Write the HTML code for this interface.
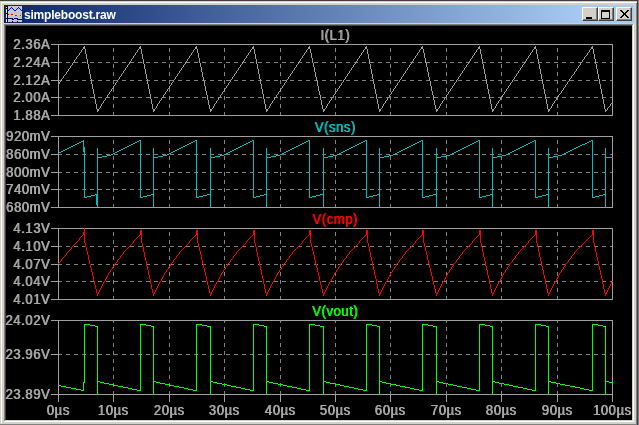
<!DOCTYPE html>
<html><head><meta charset="utf-8"><style>
html,body{margin:0;padding:0;width:639px;height:425px;overflow:hidden;background:#d4d0c8;position:relative;font-family:"Liberation Sans",sans-serif}
.abs{position:absolute}
.yl,.tt,.xl{will-change:transform;text-shadow:0.8px 0 0 currentColor;transform:scaleY(1.08)}
.yl{position:absolute;left:0;width:50px;text-align:right;font-size:13px;letter-spacing:0.6px;margin-right:-0.6px;line-height:16px;color:#a8a8a8;white-space:nowrap}
.tt{position:absolute;left:235px;width:200px;text-align:center;font-size:13px;letter-spacing:0.6px;line-height:16px;white-space:nowrap}
.xl{position:absolute;top:403px;width:80px;text-align:center;font-size:13px;letter-spacing:0.6px;line-height:16px;color:#a8a8a8;white-space:nowrap}
.btn{position:absolute;top:7px;width:16px;height:14px;background:#d4d0c8;box-sizing:border-box}
</style></head><body>
<div class="abs" style="left:0;top:0;width:639px;height:1px;background:#404040"></div>
<div class="abs" style="left:1px;top:2px;width:636px;height:1px;background:#fff"></div>
<div class="abs" style="left:1px;top:2px;width:1px;height:421px;background:#fff"></div>
<div class="abs" style="left:636px;top:3px;width:1px;height:422px;background:#808080"></div>
<div class="abs" style="left:637px;top:0;width:1px;height:425px;background:#404040"></div>
<div class="abs" style="left:638px;top:0;width:1px;height:425px;background:#808080"></div>
<div class="abs" style="left:0;top:424px;width:637px;height:1px;background:#808080"></div>
<div class="abs" style="left:4px;top:5px;width:630px;height:18px;background:linear-gradient(to right,#0a246a 0px,#a6caf0 578px,#a6caf0 630px)"></div>
<svg width="16" height="16" viewBox="0 0 16 16" style="position:absolute;left:6px;top:6px" shape-rendering="crispEdges"><rect x="0" y="0" width="16" height="16" fill="#c4c4c4"/><rect x="3" y="1" width="1" height="1" fill="#e0dcb0"/><rect x="7" y="1" width="1" height="1" fill="#e0dcb0"/><rect x="11" y="1" width="1" height="1" fill="#e0dcb0"/><rect x="15" y="1" width="1" height="1" fill="#e0dcb0"/><rect x="3" y="5" width="1" height="1" fill="#e0dcb0"/><rect x="7" y="5" width="1" height="1" fill="#e0dcb0"/><rect x="11" y="5" width="1" height="1" fill="#e0dcb0"/><rect x="15" y="5" width="1" height="1" fill="#e0dcb0"/><rect x="3" y="9" width="1" height="1" fill="#e0dcb0"/><rect x="7" y="9" width="1" height="1" fill="#e0dcb0"/><rect x="11" y="9" width="1" height="1" fill="#e0dcb0"/><rect x="15" y="9" width="1" height="1" fill="#e0dcb0"/><rect x="3" y="13" width="1" height="1" fill="#e0dcb0"/><rect x="7" y="13" width="1" height="1" fill="#e0dcb0"/><rect x="11" y="13" width="1" height="1" fill="#e0dcb0"/><rect x="15" y="13" width="1" height="1" fill="#e0dcb0"/><rect x="0" y="0" width="1" height="16" fill="#e4e4e4"/><rect x="0" y="0" width="1" height="1" fill="#000"/><rect x="0" y="2" width="1" height="1" fill="#000"/><rect x="0" y="7" width="1" height="1" fill="#000"/><rect x="0" y="12" width="1" height="1" fill="#000"/><rect x="1" y="0" width="1" height="16" fill="#000"/><rect x="2" y="4" width="1" height="1" fill="#0000ff"/><rect x="3" y="3" width="1" height="1" fill="#0000ff"/><rect x="4" y="2" width="1" height="1" fill="#0000ff"/><rect x="5" y="1" width="1" height="1" fill="#0000ff"/><rect x="6" y="2" width="1" height="1" fill="#0000ff"/><rect x="7" y="3" width="1" height="1" fill="#0000ff"/><rect x="8" y="4" width="1" height="1" fill="#0000ff"/><rect x="9" y="4" width="1" height="1" fill="#0000ff"/><rect x="10" y="3" width="1" height="1" fill="#0000ff"/><rect x="11" y="2" width="1" height="1" fill="#0000ff"/><rect x="12" y="1" width="1" height="1" fill="#0000ff"/><rect x="13" y="2" width="1" height="1" fill="#0000ff"/><rect x="14" y="3" width="1" height="1" fill="#0000ff"/><rect x="15" y="4" width="1" height="1" fill="#0000ff"/><rect x="2" y="8" width="1" height="1" fill="#f00"/><rect x="5" y="8" width="2" height="1" fill="#f00"/><rect x="9" y="9" width="2" height="1" fill="#f00"/><rect x="14" y="9" width="1" height="1" fill="#f00"/><rect x="2" y="12" width="4" height="1" fill="#000080"/><rect x="6" y="13" width="2" height="1" fill="#000080"/><rect x="8" y="12" width="4" height="1" fill="#000080"/><rect x="12" y="13" width="4" height="1" fill="#000080"/><rect x="6" y="12" width="1" height="1" fill="#000080"/><rect x="11" y="13" width="1" height="1" fill="#000080"/><rect x="6" y="15" width="1" height="1" fill="#000"/><rect x="11" y="15" width="1" height="1" fill="#000"/></svg>
<div class="abs" style="left:24px;top:6px;height:18px;line-height:18px;font-size:12px;font-weight:bold;color:#fff;white-space:nowrap;letter-spacing:-0.2px;will-change:transform">simpleboost.raw</div>
<!-- caption buttons -->
<div class="btn" style="left:582px;border-top:1px solid #fff;border-left:1px solid #fff;border-right:1px solid #404040;border-bottom:1px solid #404040"><div class="abs" style="left:0;top:0;width:13px;height:11px;border-right:1px solid #808080;border-bottom:1px solid #808080"></div><div class="abs" style="left:3px;top:9px;width:6px;height:2px;background:#000"></div></div><div class="btn" style="left:598px;border-top:1px solid #fff;border-left:1px solid #fff;border-right:1px solid #404040;border-bottom:1px solid #404040"><div class="abs" style="left:0;top:0;width:13px;height:11px;border-right:1px solid #808080;border-bottom:1px solid #808080"></div><div class="abs" style="left:2px;top:2px;width:9px;height:9px;box-sizing:border-box;border:1px solid #000;border-top-width:2px"></div></div><div class="btn" style="left:616px;border-top:1px solid #fff;border-left:1px solid #fff;border-right:1px solid #404040;border-bottom:1px solid #404040"><div class="abs" style="left:0;top:0;width:13px;height:11px;border-right:1px solid #808080;border-bottom:1px solid #808080"></div><svg class="abs" style="left:3px;top:2px" width="9" height="8" viewBox="0 0 9 8" shape-rendering="crispEdges"><path d="M0,0h2l2.5,3 2.5,-3h2l-3.5,4 3.5,4h-2l-2.5,-3 -2.5,3h-2l3.5,-4z" fill="#000"/></svg></div>
<!-- client edge -->
<div class="abs" style="left:4px;top:24px;width:630px;height:398px;background:#fff"></div>
<div class="abs" style="left:4px;top:24px;width:629px;height:397px;background:#808080"></div>
<div class="abs" style="left:5px;top:25px;width:628px;height:396px;background:#d4d0c8"></div>
<div class="abs" style="left:5px;top:25px;width:627px;height:395px;background:#404040"></div>
<div class="abs" style="left:6px;top:26px;width:626px;height:394px;background:#000"></div>
<svg width="626" height="394" viewBox="6 26 626 394" style="position:absolute;left:6px;top:26px;display:block" shape-rendering="crispEdges">
<line x1="58" y1="62.5" x2="613" y2="62.5" stroke="#808080" stroke-width="1" stroke-dasharray="4 4"/>
<line x1="58" y1="80.5" x2="613" y2="80.5" stroke="#808080" stroke-width="1" stroke-dasharray="4 4"/>
<line x1="58" y1="97.5" x2="613" y2="97.5" stroke="#808080" stroke-width="1" stroke-dasharray="4 4"/>
<line x1="113.5" y1="116" x2="113.5" y2="44" stroke="#808080" stroke-width="1" stroke-dasharray="4 4"/>
<line x1="169.5" y1="116" x2="169.5" y2="44" stroke="#808080" stroke-width="1" stroke-dasharray="4 4"/>
<line x1="224.5" y1="116" x2="224.5" y2="44" stroke="#808080" stroke-width="1" stroke-dasharray="4 4"/>
<line x1="280.5" y1="116" x2="280.5" y2="44" stroke="#808080" stroke-width="1" stroke-dasharray="4 4"/>
<line x1="335.5" y1="116" x2="335.5" y2="44" stroke="#808080" stroke-width="1" stroke-dasharray="4 4"/>
<line x1="390.5" y1="116" x2="390.5" y2="44" stroke="#808080" stroke-width="1" stroke-dasharray="4 4"/>
<line x1="446.5" y1="116" x2="446.5" y2="44" stroke="#808080" stroke-width="1" stroke-dasharray="4 4"/>
<line x1="501.5" y1="116" x2="501.5" y2="44" stroke="#808080" stroke-width="1" stroke-dasharray="4 4"/>
<line x1="557.5" y1="116" x2="557.5" y2="44" stroke="#808080" stroke-width="1" stroke-dasharray="4 4"/>
<rect x="58.5" y="44.5" width="554" height="71" fill="none" stroke="#a0a0a0" stroke-width="1"/>
<line x1="51" y1="44.5" x2="58" y2="44.5" stroke="#a0a0a0" stroke-width="1"/>
<line x1="51" y1="62.5" x2="58" y2="62.5" stroke="#a0a0a0" stroke-width="1"/>
<line x1="51" y1="80.5" x2="58" y2="80.5" stroke="#a0a0a0" stroke-width="1"/>
<line x1="51" y1="97.5" x2="58" y2="97.5" stroke="#a0a0a0" stroke-width="1"/>
<line x1="51" y1="115.5" x2="58" y2="115.5" stroke="#a0a0a0" stroke-width="1"/>
<line x1="58" y1="154.5" x2="613" y2="154.5" stroke="#808080" stroke-width="1" stroke-dasharray="4 4"/>
<line x1="58" y1="172.5" x2="613" y2="172.5" stroke="#808080" stroke-width="1" stroke-dasharray="4 4"/>
<line x1="58" y1="189.5" x2="613" y2="189.5" stroke="#808080" stroke-width="1" stroke-dasharray="4 4"/>
<line x1="113.5" y1="208" x2="113.5" y2="136" stroke="#808080" stroke-width="1" stroke-dasharray="4 4"/>
<line x1="169.5" y1="208" x2="169.5" y2="136" stroke="#808080" stroke-width="1" stroke-dasharray="4 4"/>
<line x1="224.5" y1="208" x2="224.5" y2="136" stroke="#808080" stroke-width="1" stroke-dasharray="4 4"/>
<line x1="280.5" y1="208" x2="280.5" y2="136" stroke="#808080" stroke-width="1" stroke-dasharray="4 4"/>
<line x1="335.5" y1="208" x2="335.5" y2="136" stroke="#808080" stroke-width="1" stroke-dasharray="4 4"/>
<line x1="390.5" y1="208" x2="390.5" y2="136" stroke="#808080" stroke-width="1" stroke-dasharray="4 4"/>
<line x1="446.5" y1="208" x2="446.5" y2="136" stroke="#808080" stroke-width="1" stroke-dasharray="4 4"/>
<line x1="501.5" y1="208" x2="501.5" y2="136" stroke="#808080" stroke-width="1" stroke-dasharray="4 4"/>
<line x1="557.5" y1="208" x2="557.5" y2="136" stroke="#808080" stroke-width="1" stroke-dasharray="4 4"/>
<rect x="58.5" y="136.5" width="554" height="71" fill="none" stroke="#a0a0a0" stroke-width="1"/>
<line x1="51" y1="136.5" x2="58" y2="136.5" stroke="#a0a0a0" stroke-width="1"/>
<line x1="51" y1="154.5" x2="58" y2="154.5" stroke="#a0a0a0" stroke-width="1"/>
<line x1="51" y1="172.5" x2="58" y2="172.5" stroke="#a0a0a0" stroke-width="1"/>
<line x1="51" y1="189.5" x2="58" y2="189.5" stroke="#a0a0a0" stroke-width="1"/>
<line x1="51" y1="207.5" x2="58" y2="207.5" stroke="#a0a0a0" stroke-width="1"/>
<line x1="58" y1="246.5" x2="613" y2="246.5" stroke="#808080" stroke-width="1" stroke-dasharray="4 4"/>
<line x1="58" y1="264.5" x2="613" y2="264.5" stroke="#808080" stroke-width="1" stroke-dasharray="4 4"/>
<line x1="58" y1="281.5" x2="613" y2="281.5" stroke="#808080" stroke-width="1" stroke-dasharray="4 4"/>
<line x1="113.5" y1="300" x2="113.5" y2="228" stroke="#808080" stroke-width="1" stroke-dasharray="4 4"/>
<line x1="169.5" y1="300" x2="169.5" y2="228" stroke="#808080" stroke-width="1" stroke-dasharray="4 4"/>
<line x1="224.5" y1="300" x2="224.5" y2="228" stroke="#808080" stroke-width="1" stroke-dasharray="4 4"/>
<line x1="280.5" y1="300" x2="280.5" y2="228" stroke="#808080" stroke-width="1" stroke-dasharray="4 4"/>
<line x1="335.5" y1="300" x2="335.5" y2="228" stroke="#808080" stroke-width="1" stroke-dasharray="4 4"/>
<line x1="390.5" y1="300" x2="390.5" y2="228" stroke="#808080" stroke-width="1" stroke-dasharray="4 4"/>
<line x1="446.5" y1="300" x2="446.5" y2="228" stroke="#808080" stroke-width="1" stroke-dasharray="4 4"/>
<line x1="501.5" y1="300" x2="501.5" y2="228" stroke="#808080" stroke-width="1" stroke-dasharray="4 4"/>
<line x1="557.5" y1="300" x2="557.5" y2="228" stroke="#808080" stroke-width="1" stroke-dasharray="4 4"/>
<rect x="58.5" y="228.5" width="554" height="71" fill="none" stroke="#a0a0a0" stroke-width="1"/>
<line x1="51" y1="228.5" x2="58" y2="228.5" stroke="#a0a0a0" stroke-width="1"/>
<line x1="51" y1="246.5" x2="58" y2="246.5" stroke="#a0a0a0" stroke-width="1"/>
<line x1="51" y1="264.5" x2="58" y2="264.5" stroke="#a0a0a0" stroke-width="1"/>
<line x1="51" y1="281.5" x2="58" y2="281.5" stroke="#a0a0a0" stroke-width="1"/>
<line x1="51" y1="299.5" x2="58" y2="299.5" stroke="#a0a0a0" stroke-width="1"/>
<line x1="58" y1="354.5" x2="613" y2="354.5" stroke="#808080" stroke-width="1" stroke-dasharray="4 4"/>
<line x1="113.5" y1="395" x2="113.5" y2="320" stroke="#808080" stroke-width="1" stroke-dasharray="4 4"/>
<line x1="169.5" y1="395" x2="169.5" y2="320" stroke="#808080" stroke-width="1" stroke-dasharray="4 4"/>
<line x1="224.5" y1="395" x2="224.5" y2="320" stroke="#808080" stroke-width="1" stroke-dasharray="4 4"/>
<line x1="280.5" y1="395" x2="280.5" y2="320" stroke="#808080" stroke-width="1" stroke-dasharray="4 4"/>
<line x1="335.5" y1="395" x2="335.5" y2="320" stroke="#808080" stroke-width="1" stroke-dasharray="4 4"/>
<line x1="390.5" y1="395" x2="390.5" y2="320" stroke="#808080" stroke-width="1" stroke-dasharray="4 4"/>
<line x1="446.5" y1="395" x2="446.5" y2="320" stroke="#808080" stroke-width="1" stroke-dasharray="4 4"/>
<line x1="501.5" y1="395" x2="501.5" y2="320" stroke="#808080" stroke-width="1" stroke-dasharray="4 4"/>
<line x1="557.5" y1="395" x2="557.5" y2="320" stroke="#808080" stroke-width="1" stroke-dasharray="4 4"/>
<rect x="58.5" y="320.5" width="554" height="74" fill="none" stroke="#a0a0a0" stroke-width="1"/>
<line x1="51" y1="320.5" x2="58" y2="320.5" stroke="#a0a0a0" stroke-width="1"/>
<line x1="51" y1="354.5" x2="58" y2="354.5" stroke="#a0a0a0" stroke-width="1"/>
<line x1="51" y1="394.5" x2="58" y2="394.5" stroke="#a0a0a0" stroke-width="1"/>
<line x1="58.5" y1="394" x2="58.5" y2="402" stroke="#a0a0a0" stroke-width="1"/>
<line x1="113.5" y1="394" x2="113.5" y2="402" stroke="#a0a0a0" stroke-width="1"/>
<line x1="169.5" y1="394" x2="169.5" y2="402" stroke="#a0a0a0" stroke-width="1"/>
<line x1="224.5" y1="394" x2="224.5" y2="402" stroke="#a0a0a0" stroke-width="1"/>
<line x1="280.5" y1="394" x2="280.5" y2="402" stroke="#a0a0a0" stroke-width="1"/>
<line x1="335.5" y1="394" x2="335.5" y2="402" stroke="#a0a0a0" stroke-width="1"/>
<line x1="390.5" y1="394" x2="390.5" y2="402" stroke="#a0a0a0" stroke-width="1"/>
<line x1="446.5" y1="394" x2="446.5" y2="402" stroke="#a0a0a0" stroke-width="1"/>
<line x1="501.5" y1="394" x2="501.5" y2="402" stroke="#a0a0a0" stroke-width="1"/>
<line x1="557.5" y1="394" x2="557.5" y2="402" stroke="#a0a0a0" stroke-width="1"/>
<line x1="612.5" y1="394" x2="612.5" y2="402" stroke="#a0a0a0" stroke-width="1"/>
<path fill="#a0a0a0" d="M58 84h1v1h-1zM59 82h1v2h-1zM60 81h1v1h-1zM61 79h1v2h-1zM62 78h1v1h-1zM63 76h1v2h-1zM64 75h1v1h-1zM65 74h1v1h-1zM66 72h1v2h-1zM67 71h1v1h-1zM68 69h1v2h-1zM69 68h1v1h-1zM70 66h1v2h-1zM71 65h1v1h-1zM72 63h1v2h-1zM73 62h1v1h-1zM74 60h1v2h-1zM75 59h1v1h-1zM76 57h1v2h-1zM77 56h1v1h-1zM78 55h1v1h-1zM79 53h1v2h-1zM80 52h1v1h-1zM81 50h1v2h-1zM82 49h1v1h-1zM83 47h1v2h-1zM84 46h1v3h-1zM85 49h1v5h-1zM86 54h1v5h-1zM87 59h1v5h-1zM88 64h1v5h-1zM89 69h1v5h-1zM90 74h1v5h-1zM91 79h1v5h-1zM92 84h1v5h-1zM93 89h1v5h-1zM94 94h1v5h-1zM95 99h1v5h-1zM96 104h1v5h-1zM97 109h1v3h-1zM98 109h1v2h-1zM99 108h1v1h-1zM100 106h1v2h-1zM101 104h1v2h-1zM102 103h1v1h-1zM103 101h1v2h-1zM104 100h1v1h-1zM105 98h1v2h-1zM106 97h1v1h-1zM107 95h1v2h-1zM108 94h1v1h-1zM109 92h1v2h-1zM110 91h1v1h-1zM111 89h1v2h-1zM112 88h1v1h-1zM113 86h1v2h-1zM114 85h1v1h-1zM115 83h1v2h-1zM116 82h1v1h-1zM117 80h1v2h-1zM118 79h1v1h-1zM119 77h1v2h-1zM120 76h1v1h-1zM121 74h1v2h-1zM122 73h1v1h-1zM123 71h1v2h-1zM124 70h1v1h-1zM125 68h1v2h-1zM126 67h1v1h-1zM127 65h1v2h-1zM128 64h1v1h-1zM129 62h1v2h-1zM130 61h1v1h-1zM131 59h1v2h-1zM132 58h1v1h-1zM133 56h1v2h-1zM134 55h1v1h-1zM135 53h1v2h-1zM136 52h1v1h-1zM137 50h1v2h-1zM138 49h1v1h-1zM139 47h1v2h-1zM140 46h1v3h-1zM141 49h1v5h-1zM142 54h1v5h-1zM143 59h1v5h-1zM144 64h1v5h-1zM145 69h1v5h-1zM146 74h1v5h-1zM147 79h1v5h-1zM148 84h1v5h-1zM149 89h1v5h-1zM150 94h1v5h-1zM151 99h1v5h-1zM152 104h1v5h-1zM153 109h1v3h-1zM154 109h1v2h-1zM155 108h1v1h-1zM156 106h1v2h-1zM157 104h1v2h-1zM158 103h1v1h-1zM159 101h1v2h-1zM160 100h1v1h-1zM161 98h1v2h-1zM162 97h1v1h-1zM163 95h1v2h-1zM164 94h1v1h-1zM165 92h1v2h-1zM166 91h1v1h-1zM167 89h1v2h-1zM168 88h1v1h-1zM169 86h1v2h-1zM170 85h1v1h-1zM171 83h1v2h-1zM172 82h1v1h-1zM173 80h1v2h-1zM174 79h1v1h-1zM175 77h1v2h-1zM176 76h1v1h-1zM177 74h1v2h-1zM178 73h1v1h-1zM179 71h1v2h-1zM180 70h1v1h-1zM181 68h1v2h-1zM182 67h1v1h-1zM183 65h1v2h-1zM184 64h1v1h-1zM185 62h1v2h-1zM186 61h1v1h-1zM187 59h1v2h-1zM188 58h1v1h-1zM189 56h1v2h-1zM190 55h1v1h-1zM191 53h1v2h-1zM192 52h1v1h-1zM193 50h1v2h-1zM194 49h1v1h-1zM195 47h1v2h-1zM196 46h1v3h-1zM197 49h1v4h-1zM198 53h1v5h-1zM199 58h1v5h-1zM200 63h1v4h-1zM201 67h1v5h-1zM202 72h1v5h-1zM203 77h1v4h-1zM204 81h1v5h-1zM205 86h1v5h-1zM206 91h1v4h-1zM207 95h1v5h-1zM208 100h1v5h-1zM209 105h1v4h-1zM210 109h1v3h-1zM211 109h1v2h-1zM212 108h1v1h-1zM213 106h1v2h-1zM214 104h1v2h-1zM215 103h1v1h-1zM216 101h1v2h-1zM217 100h1v1h-1zM218 98h1v2h-1zM219 97h1v1h-1zM220 95h1v2h-1zM221 94h1v1h-1zM222 92h1v2h-1zM223 91h1v1h-1zM224 89h1v2h-1zM225 88h1v1h-1zM226 86h1v2h-1zM227 85h1v1h-1zM228 83h1v2h-1zM229 82h1v1h-1zM230 80h1v2h-1zM231 79h1v1h-1zM232 77h1v2h-1zM233 76h1v1h-1zM234 74h1v2h-1zM235 73h1v1h-1zM236 71h1v2h-1zM237 70h1v1h-1zM238 68h1v2h-1zM239 67h1v1h-1zM240 65h1v2h-1zM241 64h1v1h-1zM242 62h1v2h-1zM243 61h1v1h-1zM244 59h1v2h-1zM245 58h1v1h-1zM246 56h1v2h-1zM247 55h1v1h-1zM248 53h1v2h-1zM249 52h1v1h-1zM250 50h1v2h-1zM251 49h1v1h-1zM252 47h1v2h-1zM253 46h1v3h-1zM254 49h1v5h-1zM255 54h1v5h-1zM256 59h1v5h-1zM257 64h1v5h-1zM258 69h1v5h-1zM259 74h1v5h-1zM260 79h1v5h-1zM261 84h1v5h-1zM262 89h1v5h-1zM263 94h1v5h-1zM264 99h1v5h-1zM265 104h1v5h-1zM266 109h1v3h-1zM267 109h1v2h-1zM268 108h1v1h-1zM269 106h1v2h-1zM270 104h1v2h-1zM271 103h1v1h-1zM272 101h1v2h-1zM273 100h1v1h-1zM274 98h1v2h-1zM275 97h1v1h-1zM276 95h1v2h-1zM277 94h1v1h-1zM278 92h1v2h-1zM279 91h1v1h-1zM280 89h1v2h-1zM281 88h1v1h-1zM282 86h1v2h-1zM283 85h1v1h-1zM284 83h1v2h-1zM285 82h1v1h-1zM286 80h1v2h-1zM287 79h1v1h-1zM288 77h1v2h-1zM289 76h1v1h-1zM290 74h1v2h-1zM291 73h1v1h-1zM292 71h1v2h-1zM293 70h1v1h-1zM294 68h1v2h-1zM295 67h1v1h-1zM296 65h1v2h-1zM297 64h1v1h-1zM298 62h1v2h-1zM299 61h1v1h-1zM300 59h1v2h-1zM301 58h1v1h-1zM302 56h1v2h-1zM303 55h1v1h-1zM304 53h1v2h-1zM305 52h1v1h-1zM306 50h1v2h-1zM307 49h1v1h-1zM308 47h1v2h-1zM309 46h1v3h-1zM310 49h1v4h-1zM311 53h1v5h-1zM312 58h1v5h-1zM313 63h1v4h-1zM314 67h1v5h-1zM315 72h1v5h-1zM316 77h1v4h-1zM317 81h1v5h-1zM318 86h1v5h-1zM319 91h1v4h-1zM320 95h1v5h-1zM321 100h1v5h-1zM322 105h1v4h-1zM323 109h1v3h-1zM324 109h1v2h-1zM325 108h1v1h-1zM326 106h1v2h-1zM327 104h1v2h-1zM328 103h1v1h-1zM329 101h1v2h-1zM330 100h1v1h-1zM331 98h1v2h-1zM332 97h1v1h-1zM333 95h1v2h-1zM334 94h1v1h-1zM335 92h1v2h-1zM336 91h1v1h-1zM337 89h1v2h-1zM338 88h1v1h-1zM339 86h1v2h-1zM340 85h1v1h-1zM341 83h1v2h-1zM342 82h1v1h-1zM343 80h1v2h-1zM344 79h1v1h-1zM345 77h1v2h-1zM346 76h1v1h-1zM347 74h1v2h-1zM348 73h1v1h-1zM349 71h1v2h-1zM350 70h1v1h-1zM351 68h1v2h-1zM352 67h1v1h-1zM353 65h1v2h-1zM354 64h1v1h-1zM355 62h1v2h-1zM356 61h1v1h-1zM357 59h1v2h-1zM358 58h1v1h-1zM359 56h1v2h-1zM360 55h1v1h-1zM361 53h1v2h-1zM362 52h1v1h-1zM363 50h1v2h-1zM364 49h1v1h-1zM365 47h1v2h-1zM366 46h1v3h-1zM367 49h1v5h-1zM368 54h1v5h-1zM369 59h1v5h-1zM370 64h1v5h-1zM371 69h1v5h-1zM372 74h1v5h-1zM373 79h1v5h-1zM374 84h1v5h-1zM375 89h1v5h-1zM376 94h1v5h-1zM377 99h1v5h-1zM378 104h1v5h-1zM379 109h1v3h-1zM380 109h1v2h-1zM381 108h1v1h-1zM382 106h1v2h-1zM383 104h1v2h-1zM384 103h1v1h-1zM385 101h1v2h-1zM386 100h1v1h-1zM387 98h1v2h-1zM388 97h1v1h-1zM389 95h1v2h-1zM390 94h1v1h-1zM391 92h1v2h-1zM392 91h1v1h-1zM393 89h1v2h-1zM394 88h1v1h-1zM395 86h1v2h-1zM396 85h1v1h-1zM397 83h1v2h-1zM398 82h1v1h-1zM399 80h1v2h-1zM400 79h1v1h-1zM401 77h1v2h-1zM402 76h1v1h-1zM403 74h1v2h-1zM404 73h1v1h-1zM405 71h1v2h-1zM406 70h1v1h-1zM407 68h1v2h-1zM408 67h1v1h-1zM409 65h1v2h-1zM410 64h1v1h-1zM411 62h1v2h-1zM412 61h1v1h-1zM413 59h1v2h-1zM414 58h1v1h-1zM415 56h1v2h-1zM416 55h1v1h-1zM417 53h1v2h-1zM418 52h1v1h-1zM419 50h1v2h-1zM420 49h1v1h-1zM421 47h1v2h-1zM422 46h1v3h-1zM423 49h1v4h-1zM424 53h1v5h-1zM425 58h1v5h-1zM426 63h1v4h-1zM427 67h1v5h-1zM428 72h1v5h-1zM429 77h1v4h-1zM430 81h1v5h-1zM431 86h1v5h-1zM432 91h1v4h-1zM433 95h1v5h-1zM434 100h1v5h-1zM435 105h1v4h-1zM436 109h1v3h-1zM437 109h1v2h-1zM438 108h1v1h-1zM439 106h1v2h-1zM440 104h1v2h-1zM441 103h1v1h-1zM442 101h1v2h-1zM443 100h1v1h-1zM444 98h1v2h-1zM445 97h1v1h-1zM446 95h1v2h-1zM447 94h1v1h-1zM448 92h1v2h-1zM449 91h1v1h-1zM450 89h1v2h-1zM451 88h1v1h-1zM452 86h1v2h-1zM453 85h1v1h-1zM454 83h1v2h-1zM455 82h1v1h-1zM456 80h1v2h-1zM457 79h1v1h-1zM458 77h1v2h-1zM459 76h1v1h-1zM460 74h1v2h-1zM461 73h1v1h-1zM462 71h1v2h-1zM463 70h1v1h-1zM464 68h1v2h-1zM465 67h1v1h-1zM466 65h1v2h-1zM467 64h1v1h-1zM468 62h1v2h-1zM469 61h1v1h-1zM470 59h1v2h-1zM471 58h1v1h-1zM472 56h1v2h-1zM473 55h1v1h-1zM474 53h1v2h-1zM475 52h1v1h-1zM476 50h1v2h-1zM477 49h1v1h-1zM478 47h1v2h-1zM479 46h1v3h-1zM480 49h1v5h-1zM481 54h1v5h-1zM482 59h1v5h-1zM483 64h1v5h-1zM484 69h1v5h-1zM485 74h1v5h-1zM486 79h1v5h-1zM487 84h1v5h-1zM488 89h1v5h-1zM489 94h1v5h-1zM490 99h1v5h-1zM491 104h1v5h-1zM492 109h1v3h-1zM493 109h1v2h-1zM494 108h1v1h-1zM495 106h1v2h-1zM496 104h1v2h-1zM497 103h1v1h-1zM498 101h1v2h-1zM499 100h1v1h-1zM500 98h1v2h-1zM501 97h1v1h-1zM502 95h1v2h-1zM503 94h1v1h-1zM504 92h1v2h-1zM505 91h1v1h-1zM506 89h1v2h-1zM507 88h1v1h-1zM508 86h1v2h-1zM509 85h1v1h-1zM510 83h1v2h-1zM511 82h1v1h-1zM512 80h1v2h-1zM513 79h1v1h-1zM514 77h1v2h-1zM515 76h1v1h-1zM516 74h1v2h-1zM517 73h1v1h-1zM518 71h1v2h-1zM519 70h1v1h-1zM520 68h1v2h-1zM521 67h1v1h-1zM522 65h1v2h-1zM523 64h1v1h-1zM524 62h1v2h-1zM525 61h1v1h-1zM526 59h1v2h-1zM527 58h1v1h-1zM528 56h1v2h-1zM529 55h1v1h-1zM530 53h1v2h-1zM531 52h1v1h-1zM532 50h1v2h-1zM533 49h1v1h-1zM534 47h1v2h-1zM535 46h1v3h-1zM536 49h1v5h-1zM537 54h1v5h-1zM538 59h1v5h-1zM539 64h1v5h-1zM540 69h1v5h-1zM541 74h1v5h-1zM542 79h1v5h-1zM543 84h1v5h-1zM544 89h1v5h-1zM545 94h1v5h-1zM546 99h1v5h-1zM547 104h1v5h-1zM548 109h1v3h-1zM549 109h1v2h-1zM550 108h1v1h-1zM551 106h1v2h-1zM552 104h1v2h-1zM553 103h1v1h-1zM554 101h1v2h-1zM555 100h1v1h-1zM556 98h1v2h-1zM557 97h1v1h-1zM558 95h1v2h-1zM559 94h1v1h-1zM560 93h1v1h-1zM561 91h1v2h-1zM562 90h1v1h-1zM563 88h1v2h-1zM564 87h1v1h-1zM565 85h1v2h-1zM566 84h1v1h-1zM567 82h1v2h-1zM568 81h1v1h-1zM569 79h1v2h-1zM570 78h1v1h-1zM571 76h1v2h-1zM572 75h1v1h-1zM573 74h1v1h-1zM574 72h1v2h-1zM575 71h1v1h-1zM576 69h1v2h-1zM577 68h1v1h-1zM578 66h1v2h-1zM579 65h1v1h-1zM580 63h1v2h-1zM581 62h1v1h-1zM582 60h1v2h-1zM583 59h1v1h-1zM584 57h1v2h-1zM585 56h1v1h-1zM586 55h1v1h-1zM587 53h1v2h-1zM588 52h1v1h-1zM589 50h1v2h-1zM590 49h1v1h-1zM591 47h1v2h-1zM592 46h1v3h-1zM593 49h1v5h-1zM594 54h1v5h-1zM595 59h1v5h-1zM596 64h1v5h-1zM597 69h1v5h-1zM598 74h1v5h-1zM599 79h1v5h-1zM600 84h1v5h-1zM601 89h1v5h-1zM602 94h1v5h-1zM603 99h1v5h-1zM604 104h1v5h-1zM605 109h1v3h-1zM606 110h1v1h-1zM607 108h1v2h-1zM608 107h1v1h-1zM609 106h1v1h-1zM610 104h1v2h-1zM611 103h1v1h-1zM612 102h1v1h-1z"/>
<path fill="#00bcbc" d="M58 153h1v1h-1zM59 152h1v1h-1zM60 152h1v1h-1zM61 151h1v1h-1zM62 151h1v1h-1zM63 150h1v1h-1zM64 150h1v1h-1zM65 149h1v1h-1zM66 149h1v1h-1zM67 148h1v1h-1zM68 148h1v1h-1zM69 147h1v1h-1zM70 147h1v1h-1zM71 146h1v1h-1zM72 146h1v1h-1zM73 145h1v1h-1zM74 145h1v1h-1zM75 144h1v1h-1zM76 144h1v1h-1zM77 143h1v1h-1zM78 143h1v1h-1zM79 142h1v1h-1zM80 142h1v1h-1zM81 141h1v1h-1zM82 141h1v1h-1zM83 140h1v12h-1zM84 147h1v51h-1zM85 197h1v1h-1zM86 197h1v1h-1zM87 196h1v1h-1zM88 196h1v1h-1zM89 196h1v1h-1zM90 196h1v1h-1zM91 195h1v1h-1zM92 195h1v1h-1zM93 195h1v1h-1zM94 195h1v1h-1zM95 194h1v1h-1zM96 194h1v11h-1zM97 148h1v59h-1zM98 157h1v1h-1zM99 157h1v1h-1zM100 157h1v1h-1zM101 157h1v1h-1zM102 156h1v1h-1zM103 156h1v1h-1zM104 156h1v1h-1zM105 156h1v1h-1zM106 156h1v1h-1zM107 155h1v1h-1zM108 155h1v1h-1zM109 155h1v1h-1zM110 155h1v1h-1zM111 154h1v1h-1zM112 154h1v1h-1zM113 153h1v1h-1zM114 153h1v1h-1zM115 152h1v1h-1zM116 152h1v1h-1zM117 151h1v1h-1zM118 151h1v1h-1zM119 150h1v1h-1zM120 150h1v1h-1zM121 149h1v1h-1zM122 149h1v1h-1zM123 148h1v1h-1zM124 148h1v1h-1zM125 147h1v1h-1zM126 147h1v1h-1zM127 146h1v1h-1zM128 146h1v1h-1zM129 145h1v1h-1zM130 145h1v1h-1zM131 144h1v1h-1zM132 144h1v1h-1zM133 143h1v1h-1zM134 143h1v1h-1zM135 142h1v1h-1zM136 142h1v1h-1zM137 141h1v1h-1zM138 141h1v1h-1zM139 140h1v1h-1zM140 140h1v58h-1zM141 197h1v1h-1zM142 197h1v1h-1zM143 196h1v1h-1zM144 196h1v1h-1zM145 196h1v1h-1zM146 196h1v1h-1zM147 195h1v1h-1zM148 195h1v1h-1zM149 195h1v1h-1zM150 195h1v1h-1zM151 194h1v1h-1zM152 194h1v1h-1zM153 148h1v59h-1zM154 157h1v1h-1zM155 157h1v1h-1zM156 157h1v1h-1zM157 157h1v1h-1zM158 156h1v1h-1zM159 156h1v1h-1zM160 156h1v1h-1zM161 156h1v1h-1zM162 156h1v1h-1zM163 155h1v1h-1zM164 155h1v1h-1zM165 155h1v1h-1zM166 155h1v1h-1zM167 154h1v1h-1zM168 154h1v1h-1zM169 153h1v1h-1zM170 153h1v1h-1zM171 152h1v1h-1zM172 152h1v1h-1zM173 151h1v1h-1zM174 151h1v1h-1zM175 150h1v1h-1zM176 150h1v1h-1zM177 149h1v1h-1zM178 149h1v1h-1zM179 148h1v1h-1zM180 148h1v1h-1zM181 147h1v1h-1zM182 147h1v1h-1zM183 146h1v1h-1zM184 146h1v1h-1zM185 145h1v1h-1zM186 145h1v1h-1zM187 144h1v1h-1zM188 144h1v1h-1zM189 143h1v1h-1zM190 143h1v1h-1zM191 142h1v1h-1zM192 142h1v1h-1zM193 141h1v1h-1zM194 141h1v1h-1zM195 140h1v1h-1zM196 140h1v58h-1zM197 197h1v1h-1zM198 197h1v1h-1zM199 196h1v1h-1zM200 196h1v1h-1zM201 196h1v1h-1zM202 196h1v1h-1zM203 195h1v1h-1zM204 195h1v1h-1zM205 195h1v1h-1zM206 195h1v1h-1zM207 194h1v1h-1zM208 194h1v1h-1zM209 194h1v1h-1zM210 148h1v59h-1zM211 157h1v1h-1zM212 157h1v1h-1zM213 157h1v1h-1zM214 157h1v1h-1zM215 156h1v1h-1zM216 156h1v1h-1zM217 156h1v1h-1zM218 156h1v1h-1zM219 156h1v1h-1zM220 155h1v1h-1zM221 155h1v1h-1zM222 155h1v1h-1zM223 155h1v1h-1zM224 154h1v1h-1zM225 154h1v1h-1zM226 153h1v1h-1zM227 153h1v1h-1zM228 152h1v1h-1zM229 152h1v1h-1zM230 151h1v1h-1zM231 151h1v1h-1zM232 150h1v1h-1zM233 150h1v1h-1zM234 149h1v1h-1zM235 149h1v1h-1zM236 148h1v1h-1zM237 148h1v1h-1zM238 147h1v1h-1zM239 147h1v1h-1zM240 146h1v1h-1zM241 146h1v1h-1zM242 145h1v1h-1zM243 145h1v1h-1zM244 144h1v1h-1zM245 144h1v1h-1zM246 143h1v1h-1zM247 143h1v1h-1zM248 142h1v1h-1zM249 142h1v1h-1zM250 141h1v1h-1zM251 141h1v1h-1zM252 140h1v1h-1zM253 140h1v58h-1zM254 197h1v1h-1zM255 197h1v1h-1zM256 196h1v1h-1zM257 196h1v1h-1zM258 196h1v1h-1zM259 196h1v1h-1zM260 195h1v1h-1zM261 195h1v1h-1zM262 195h1v1h-1zM263 195h1v1h-1zM264 194h1v1h-1zM265 194h1v1h-1zM266 148h1v59h-1zM267 157h1v1h-1zM268 157h1v1h-1zM269 157h1v1h-1zM270 157h1v1h-1zM271 156h1v1h-1zM272 156h1v1h-1zM273 156h1v1h-1zM274 156h1v1h-1zM275 156h1v1h-1zM276 155h1v1h-1zM277 155h1v1h-1zM278 155h1v1h-1zM279 155h1v1h-1zM280 154h1v1h-1zM281 154h1v1h-1zM282 153h1v1h-1zM283 153h1v1h-1zM284 152h1v1h-1zM285 152h1v1h-1zM286 151h1v1h-1zM287 151h1v1h-1zM288 150h1v1h-1zM289 150h1v1h-1zM290 149h1v1h-1zM291 149h1v1h-1zM292 148h1v1h-1zM293 148h1v1h-1zM294 147h1v1h-1zM295 147h1v1h-1zM296 146h1v1h-1zM297 146h1v1h-1zM298 145h1v1h-1zM299 145h1v1h-1zM300 144h1v1h-1zM301 144h1v1h-1zM302 143h1v1h-1zM303 143h1v1h-1zM304 142h1v1h-1zM305 142h1v1h-1zM306 141h1v1h-1zM307 141h1v1h-1zM308 140h1v1h-1zM309 140h1v58h-1zM310 197h1v1h-1zM311 197h1v1h-1zM312 196h1v1h-1zM313 196h1v1h-1zM314 196h1v1h-1zM315 196h1v1h-1zM316 195h1v1h-1zM317 195h1v1h-1zM318 195h1v1h-1zM319 195h1v1h-1zM320 194h1v1h-1zM321 194h1v1h-1zM322 194h1v1h-1zM323 148h1v59h-1zM324 157h1v1h-1zM325 157h1v1h-1zM326 157h1v1h-1zM327 157h1v1h-1zM328 156h1v1h-1zM329 156h1v1h-1zM330 156h1v1h-1zM331 156h1v1h-1zM332 156h1v1h-1zM333 155h1v1h-1zM334 155h1v1h-1zM335 155h1v1h-1zM336 155h1v1h-1zM337 154h1v1h-1zM338 154h1v1h-1zM339 153h1v1h-1zM340 153h1v1h-1zM341 152h1v1h-1zM342 152h1v1h-1zM343 151h1v1h-1zM344 151h1v1h-1zM345 150h1v1h-1zM346 150h1v1h-1zM347 149h1v1h-1zM348 149h1v1h-1zM349 148h1v1h-1zM350 148h1v1h-1zM351 147h1v1h-1zM352 147h1v1h-1zM353 146h1v1h-1zM354 146h1v1h-1zM355 145h1v1h-1zM356 145h1v1h-1zM357 144h1v1h-1zM358 144h1v1h-1zM359 143h1v1h-1zM360 143h1v1h-1zM361 142h1v1h-1zM362 142h1v1h-1zM363 141h1v1h-1zM364 141h1v1h-1zM365 140h1v1h-1zM366 140h1v58h-1zM367 197h1v1h-1zM368 197h1v1h-1zM369 196h1v1h-1zM370 196h1v1h-1zM371 196h1v1h-1zM372 196h1v1h-1zM373 195h1v1h-1zM374 195h1v1h-1zM375 195h1v1h-1zM376 195h1v1h-1zM377 194h1v1h-1zM378 194h1v1h-1zM379 148h1v59h-1zM380 157h1v1h-1zM381 157h1v1h-1zM382 157h1v1h-1zM383 157h1v1h-1zM384 156h1v1h-1zM385 156h1v1h-1zM386 156h1v1h-1zM387 156h1v1h-1zM388 156h1v1h-1zM389 155h1v1h-1zM390 155h1v1h-1zM391 155h1v1h-1zM392 155h1v1h-1zM393 154h1v1h-1zM394 154h1v1h-1zM395 153h1v1h-1zM396 153h1v1h-1zM397 152h1v1h-1zM398 152h1v1h-1zM399 151h1v1h-1zM400 151h1v1h-1zM401 150h1v1h-1zM402 150h1v1h-1zM403 149h1v1h-1zM404 149h1v1h-1zM405 148h1v1h-1zM406 148h1v1h-1zM407 147h1v1h-1zM408 147h1v1h-1zM409 146h1v1h-1zM410 146h1v1h-1zM411 145h1v1h-1zM412 145h1v1h-1zM413 144h1v1h-1zM414 144h1v1h-1zM415 143h1v1h-1zM416 143h1v1h-1zM417 142h1v1h-1zM418 142h1v1h-1zM419 141h1v1h-1zM420 141h1v1h-1zM421 140h1v1h-1zM422 140h1v58h-1zM423 197h1v1h-1zM424 197h1v1h-1zM425 196h1v1h-1zM426 196h1v1h-1zM427 196h1v1h-1zM428 196h1v1h-1zM429 195h1v1h-1zM430 195h1v1h-1zM431 195h1v1h-1zM432 195h1v1h-1zM433 194h1v1h-1zM434 194h1v1h-1zM435 194h1v1h-1zM436 148h1v59h-1zM437 157h1v1h-1zM438 157h1v1h-1zM439 157h1v1h-1zM440 157h1v1h-1zM441 156h1v1h-1zM442 156h1v1h-1zM443 156h1v1h-1zM444 156h1v1h-1zM445 156h1v1h-1zM446 155h1v1h-1zM447 155h1v1h-1zM448 155h1v1h-1zM449 155h1v1h-1zM450 154h1v1h-1zM451 154h1v1h-1zM452 153h1v1h-1zM453 153h1v1h-1zM454 152h1v1h-1zM455 152h1v1h-1zM456 151h1v1h-1zM457 151h1v1h-1zM458 150h1v1h-1zM459 150h1v1h-1zM460 149h1v1h-1zM461 149h1v1h-1zM462 148h1v1h-1zM463 148h1v1h-1zM464 147h1v1h-1zM465 147h1v1h-1zM466 146h1v1h-1zM467 146h1v1h-1zM468 145h1v1h-1zM469 145h1v1h-1zM470 144h1v1h-1zM471 144h1v1h-1zM472 143h1v1h-1zM473 143h1v1h-1zM474 142h1v1h-1zM475 142h1v1h-1zM476 141h1v1h-1zM477 141h1v1h-1zM478 140h1v1h-1zM479 140h1v58h-1zM480 197h1v1h-1zM481 197h1v1h-1zM482 196h1v1h-1zM483 196h1v1h-1zM484 196h1v1h-1zM485 196h1v1h-1zM486 195h1v1h-1zM487 195h1v1h-1zM488 195h1v1h-1zM489 195h1v1h-1zM490 194h1v1h-1zM491 194h1v1h-1zM492 148h1v59h-1zM493 157h1v1h-1zM494 157h1v1h-1zM495 157h1v1h-1zM496 157h1v1h-1zM497 156h1v1h-1zM498 156h1v1h-1zM499 156h1v1h-1zM500 156h1v1h-1zM501 156h1v1h-1zM502 155h1v1h-1zM503 155h1v1h-1zM504 155h1v1h-1zM505 155h1v1h-1zM506 154h1v1h-1zM507 154h1v1h-1zM508 153h1v1h-1zM509 153h1v1h-1zM510 152h1v1h-1zM511 152h1v1h-1zM512 151h1v1h-1zM513 151h1v1h-1zM514 150h1v1h-1zM515 150h1v1h-1zM516 149h1v1h-1zM517 149h1v1h-1zM518 148h1v1h-1zM519 148h1v1h-1zM520 147h1v1h-1zM521 147h1v1h-1zM522 146h1v1h-1zM523 146h1v1h-1zM524 145h1v1h-1zM525 145h1v1h-1zM526 144h1v1h-1zM527 144h1v1h-1zM528 143h1v1h-1zM529 143h1v1h-1zM530 142h1v1h-1zM531 142h1v1h-1zM532 141h1v1h-1zM533 141h1v1h-1zM534 140h1v1h-1zM535 140h1v58h-1zM536 197h1v1h-1zM537 197h1v1h-1zM538 196h1v1h-1zM539 196h1v1h-1zM540 196h1v1h-1zM541 196h1v1h-1zM542 195h1v1h-1zM543 195h1v1h-1zM544 195h1v1h-1zM545 195h1v1h-1zM546 194h1v1h-1zM547 194h1v1h-1zM548 148h1v59h-1zM549 157h1v1h-1zM550 157h1v1h-1zM551 157h1v1h-1zM552 157h1v1h-1zM553 156h1v1h-1zM554 156h1v1h-1zM555 156h1v1h-1zM556 156h1v1h-1zM557 156h1v1h-1zM558 155h1v1h-1zM559 155h1v1h-1zM560 155h1v1h-1zM561 155h1v1h-1zM562 154h1v1h-1zM563 154h1v1h-1zM564 153h1v1h-1zM565 153h1v1h-1zM566 152h1v1h-1zM567 152h1v1h-1zM568 151h1v1h-1zM569 151h1v1h-1zM570 150h1v1h-1zM571 150h1v1h-1zM572 149h1v1h-1zM573 149h1v1h-1zM574 148h1v1h-1zM575 148h1v1h-1zM576 147h1v1h-1zM577 147h1v1h-1zM578 146h1v1h-1zM579 146h1v1h-1zM580 145h1v1h-1zM581 145h1v1h-1zM582 144h1v1h-1zM583 144h1v1h-1zM584 144h1v1h-1zM585 143h1v1h-1zM586 143h1v1h-1zM587 142h1v1h-1zM588 142h1v1h-1zM589 141h1v1h-1zM590 141h1v1h-1zM591 140h1v1h-1zM592 140h1v58h-1zM593 197h1v1h-1zM594 197h1v1h-1zM595 196h1v1h-1zM596 196h1v1h-1zM597 196h1v1h-1zM598 196h1v1h-1zM599 195h1v1h-1zM600 195h1v1h-1zM601 195h1v1h-1zM602 195h1v1h-1zM603 194h1v1h-1zM604 194h1v1h-1zM605 148h1v59h-1zM606 157h1v1h-1zM607 157h1v1h-1zM608 157h1v1h-1zM609 157h1v1h-1zM610 157h1v1h-1zM611 157h1v1h-1zM612 157h1v1h-1z"/>
<path fill="#ff0000" d="M58 263h1v1h-1zM59 262h1v1h-1zM60 261h1v1h-1zM61 259h1v2h-1zM62 258h1v1h-1zM63 257h1v1h-1zM64 256h1v1h-1zM65 255h1v1h-1zM66 253h1v2h-1zM67 252h1v1h-1zM68 251h1v1h-1zM69 250h1v1h-1zM70 249h1v1h-1zM71 247h1v2h-1zM72 246h1v1h-1zM73 245h1v1h-1zM74 244h1v1h-1zM75 243h1v1h-1zM76 242h1v1h-1zM77 241h1v1h-1zM78 240h1v1h-1zM79 238h1v2h-1zM80 237h1v1h-1zM81 236h1v1h-1zM82 235h1v1h-1zM83 232h1v3h-1zM84 228h1v15h-1zM85 243h1v4h-1zM86 247h1v4h-1zM87 251h1v4h-1zM88 255h1v5h-1zM89 260h1v4h-1zM90 264h1v4h-1zM91 268h1v4h-1zM92 272h1v4h-1zM93 276h1v5h-1zM94 281h1v4h-1zM95 285h1v4h-1zM96 289h1v4h-1zM97 293h1v3h-1zM98 292h1v2h-1zM99 290h1v2h-1zM100 288h1v2h-1zM101 286h1v2h-1zM102 284h1v2h-1zM103 282h1v2h-1zM104 281h1v1h-1zM105 279h1v2h-1zM106 277h1v2h-1zM107 275h1v2h-1zM108 273h1v2h-1zM109 272h1v1h-1zM110 270h1v2h-1zM111 269h1v1h-1zM112 267h1v2h-1zM113 266h1v1h-1zM114 264h1v2h-1zM115 263h1v1h-1zM116 262h1v1h-1zM117 260h1v2h-1zM118 259h1v1h-1zM119 258h1v1h-1zM120 256h1v2h-1zM121 255h1v1h-1zM122 254h1v1h-1zM123 252h1v2h-1zM124 251h1v1h-1zM125 250h1v1h-1zM126 249h1v1h-1zM127 248h1v1h-1zM128 247h1v1h-1zM129 246h1v1h-1zM130 245h1v1h-1zM131 244h1v1h-1zM132 243h1v1h-1zM133 241h1v2h-1zM134 240h1v1h-1zM135 239h1v1h-1zM136 238h1v1h-1zM137 237h1v1h-1zM138 236h1v1h-1zM139 235h1v1h-1zM140 230h1v5h-1zM141 230h1v13h-1zM142 243h1v4h-1zM143 247h1v5h-1zM144 252h1v5h-1zM145 257h1v4h-1zM146 261h1v5h-1zM147 266h1v4h-1zM148 270h1v5h-1zM149 275h1v4h-1zM150 279h1v5h-1zM151 284h1v5h-1zM152 289h1v4h-1zM153 293h1v3h-1zM154 292h1v2h-1zM155 290h1v2h-1zM156 288h1v2h-1zM157 286h1v2h-1zM158 284h1v2h-1zM159 282h1v2h-1zM160 281h1v1h-1zM161 279h1v2h-1zM162 277h1v2h-1zM163 275h1v2h-1zM164 273h1v2h-1zM165 272h1v1h-1zM166 270h1v2h-1zM167 269h1v1h-1zM168 267h1v2h-1zM169 266h1v1h-1zM170 264h1v2h-1zM171 263h1v1h-1zM172 262h1v1h-1zM173 260h1v2h-1zM174 259h1v1h-1zM175 258h1v1h-1zM176 256h1v2h-1zM177 255h1v1h-1zM178 254h1v1h-1zM179 252h1v2h-1zM180 251h1v1h-1zM181 250h1v1h-1zM182 249h1v1h-1zM183 248h1v1h-1zM184 247h1v1h-1zM185 246h1v1h-1zM186 245h1v1h-1zM187 244h1v1h-1zM188 243h1v1h-1zM189 241h1v2h-1zM190 240h1v1h-1zM191 239h1v1h-1zM192 238h1v1h-1zM193 237h1v1h-1zM194 236h1v1h-1zM195 235h1v1h-1zM196 230h1v5h-1zM197 230h1v13h-1zM198 243h1v4h-1zM199 247h1v4h-1zM200 251h1v4h-1zM201 255h1v5h-1zM202 260h1v4h-1zM203 264h1v4h-1zM204 268h1v4h-1zM205 272h1v4h-1zM206 276h1v5h-1zM207 281h1v4h-1zM208 285h1v4h-1zM209 289h1v4h-1zM210 293h1v3h-1zM211 292h1v2h-1zM212 290h1v2h-1zM213 288h1v2h-1zM214 286h1v2h-1zM215 284h1v2h-1zM216 282h1v2h-1zM217 281h1v1h-1zM218 279h1v2h-1zM219 277h1v2h-1zM220 275h1v2h-1zM221 273h1v2h-1zM222 272h1v1h-1zM223 270h1v2h-1zM224 269h1v1h-1zM225 267h1v2h-1zM226 266h1v1h-1zM227 264h1v2h-1zM228 263h1v1h-1zM229 262h1v1h-1zM230 260h1v2h-1zM231 259h1v1h-1zM232 258h1v1h-1zM233 256h1v2h-1zM234 255h1v1h-1zM235 254h1v1h-1zM236 252h1v2h-1zM237 251h1v1h-1zM238 250h1v1h-1zM239 249h1v1h-1zM240 248h1v1h-1zM241 247h1v1h-1zM242 246h1v1h-1zM243 245h1v1h-1zM244 244h1v1h-1zM245 243h1v1h-1zM246 241h1v2h-1zM247 240h1v1h-1zM248 239h1v1h-1zM249 238h1v1h-1zM250 237h1v1h-1zM251 236h1v1h-1zM252 235h1v1h-1zM253 230h1v5h-1zM254 230h1v13h-1zM255 243h1v4h-1zM256 247h1v5h-1zM257 252h1v5h-1zM258 257h1v4h-1zM259 261h1v5h-1zM260 266h1v4h-1zM261 270h1v5h-1zM262 275h1v4h-1zM263 279h1v5h-1zM264 284h1v5h-1zM265 289h1v4h-1zM266 293h1v3h-1zM267 292h1v2h-1zM268 290h1v2h-1zM269 288h1v2h-1zM270 286h1v2h-1zM271 284h1v2h-1zM272 282h1v2h-1zM273 281h1v1h-1zM274 279h1v2h-1zM275 277h1v2h-1zM276 275h1v2h-1zM277 273h1v2h-1zM278 272h1v1h-1zM279 270h1v2h-1zM280 269h1v1h-1zM281 267h1v2h-1zM282 266h1v1h-1zM283 264h1v2h-1zM284 263h1v1h-1zM285 262h1v1h-1zM286 260h1v2h-1zM287 259h1v1h-1zM288 258h1v1h-1zM289 256h1v2h-1zM290 255h1v1h-1zM291 254h1v1h-1zM292 252h1v2h-1zM293 251h1v1h-1zM294 250h1v1h-1zM295 249h1v1h-1zM296 248h1v1h-1zM297 247h1v1h-1zM298 246h1v1h-1zM299 245h1v1h-1zM300 244h1v1h-1zM301 243h1v1h-1zM302 241h1v2h-1zM303 240h1v1h-1zM304 239h1v1h-1zM305 238h1v1h-1zM306 237h1v1h-1zM307 236h1v1h-1zM308 235h1v1h-1zM309 230h1v5h-1zM310 230h1v13h-1zM311 243h1v4h-1zM312 247h1v4h-1zM313 251h1v4h-1zM314 255h1v5h-1zM315 260h1v4h-1zM316 264h1v4h-1zM317 268h1v4h-1zM318 272h1v4h-1zM319 276h1v5h-1zM320 281h1v4h-1zM321 285h1v4h-1zM322 289h1v4h-1zM323 293h1v3h-1zM324 292h1v2h-1zM325 290h1v2h-1zM326 288h1v2h-1zM327 286h1v2h-1zM328 284h1v2h-1zM329 282h1v2h-1zM330 281h1v1h-1zM331 279h1v2h-1zM332 277h1v2h-1zM333 275h1v2h-1zM334 273h1v2h-1zM335 272h1v1h-1zM336 270h1v2h-1zM337 269h1v1h-1zM338 267h1v2h-1zM339 266h1v1h-1zM340 264h1v2h-1zM341 263h1v1h-1zM342 262h1v1h-1zM343 260h1v2h-1zM344 259h1v1h-1zM345 258h1v1h-1zM346 256h1v2h-1zM347 255h1v1h-1zM348 254h1v1h-1zM349 252h1v2h-1zM350 251h1v1h-1zM351 250h1v1h-1zM352 249h1v1h-1zM353 248h1v1h-1zM354 247h1v1h-1zM355 246h1v1h-1zM356 245h1v1h-1zM357 244h1v1h-1zM358 243h1v1h-1zM359 241h1v2h-1zM360 240h1v1h-1zM361 239h1v1h-1zM362 238h1v1h-1zM363 237h1v1h-1zM364 236h1v1h-1zM365 235h1v1h-1zM366 230h1v5h-1zM367 230h1v13h-1zM368 243h1v4h-1zM369 247h1v5h-1zM370 252h1v5h-1zM371 257h1v4h-1zM372 261h1v5h-1zM373 266h1v4h-1zM374 270h1v5h-1zM375 275h1v4h-1zM376 279h1v5h-1zM377 284h1v5h-1zM378 289h1v4h-1zM379 293h1v3h-1zM380 292h1v2h-1zM381 290h1v2h-1zM382 288h1v2h-1zM383 286h1v2h-1zM384 284h1v2h-1zM385 282h1v2h-1zM386 281h1v1h-1zM387 279h1v2h-1zM388 277h1v2h-1zM389 275h1v2h-1zM390 273h1v2h-1zM391 272h1v1h-1zM392 270h1v2h-1zM393 269h1v1h-1zM394 267h1v2h-1zM395 266h1v1h-1zM396 264h1v2h-1zM397 263h1v1h-1zM398 262h1v1h-1zM399 260h1v2h-1zM400 259h1v1h-1zM401 258h1v1h-1zM402 256h1v2h-1zM403 255h1v1h-1zM404 254h1v1h-1zM405 252h1v2h-1zM406 251h1v1h-1zM407 250h1v1h-1zM408 249h1v1h-1zM409 248h1v1h-1zM410 247h1v1h-1zM411 246h1v1h-1zM412 245h1v1h-1zM413 244h1v1h-1zM414 243h1v1h-1zM415 241h1v2h-1zM416 240h1v1h-1zM417 239h1v1h-1zM418 238h1v1h-1zM419 237h1v1h-1zM420 236h1v1h-1zM421 235h1v1h-1zM422 230h1v5h-1zM423 230h1v13h-1zM424 243h1v4h-1zM425 247h1v4h-1zM426 251h1v4h-1zM427 255h1v5h-1zM428 260h1v4h-1zM429 264h1v4h-1zM430 268h1v4h-1zM431 272h1v4h-1zM432 276h1v5h-1zM433 281h1v4h-1zM434 285h1v4h-1zM435 289h1v4h-1zM436 293h1v3h-1zM437 292h1v2h-1zM438 290h1v2h-1zM439 288h1v2h-1zM440 286h1v2h-1zM441 284h1v2h-1zM442 282h1v2h-1zM443 281h1v1h-1zM444 279h1v2h-1zM445 277h1v2h-1zM446 275h1v2h-1zM447 273h1v2h-1zM448 272h1v1h-1zM449 270h1v2h-1zM450 269h1v1h-1zM451 267h1v2h-1zM452 266h1v1h-1zM453 264h1v2h-1zM454 263h1v1h-1zM455 262h1v1h-1zM456 260h1v2h-1zM457 259h1v1h-1zM458 258h1v1h-1zM459 256h1v2h-1zM460 255h1v1h-1zM461 254h1v1h-1zM462 252h1v2h-1zM463 251h1v1h-1zM464 250h1v1h-1zM465 249h1v1h-1zM466 248h1v1h-1zM467 247h1v1h-1zM468 246h1v1h-1zM469 245h1v1h-1zM470 244h1v1h-1zM471 243h1v1h-1zM472 241h1v2h-1zM473 240h1v1h-1zM474 239h1v1h-1zM475 238h1v1h-1zM476 237h1v1h-1zM477 236h1v1h-1zM478 235h1v1h-1zM479 230h1v5h-1zM480 230h1v13h-1zM481 243h1v4h-1zM482 247h1v5h-1zM483 252h1v5h-1zM484 257h1v4h-1zM485 261h1v5h-1zM486 266h1v4h-1zM487 270h1v5h-1zM488 275h1v4h-1zM489 279h1v5h-1zM490 284h1v5h-1zM491 289h1v4h-1zM492 293h1v3h-1zM493 292h1v2h-1zM494 290h1v2h-1zM495 288h1v2h-1zM496 286h1v2h-1zM497 284h1v2h-1zM498 282h1v2h-1zM499 281h1v1h-1zM500 279h1v2h-1zM501 277h1v2h-1zM502 275h1v2h-1zM503 273h1v2h-1zM504 272h1v1h-1zM505 270h1v2h-1zM506 269h1v1h-1zM507 267h1v2h-1zM508 266h1v1h-1zM509 264h1v2h-1zM510 263h1v1h-1zM511 262h1v1h-1zM512 260h1v2h-1zM513 259h1v1h-1zM514 258h1v1h-1zM515 256h1v2h-1zM516 255h1v1h-1zM517 254h1v1h-1zM518 252h1v2h-1zM519 251h1v1h-1zM520 250h1v1h-1zM521 249h1v1h-1zM522 248h1v1h-1zM523 247h1v1h-1zM524 246h1v1h-1zM525 245h1v1h-1zM526 244h1v1h-1zM527 243h1v1h-1zM528 241h1v2h-1zM529 240h1v1h-1zM530 239h1v1h-1zM531 238h1v1h-1zM532 237h1v1h-1zM533 236h1v1h-1zM534 235h1v1h-1zM535 230h1v5h-1zM536 230h1v13h-1zM537 243h1v4h-1zM538 247h1v5h-1zM539 252h1v5h-1zM540 257h1v4h-1zM541 261h1v5h-1zM542 266h1v4h-1zM543 270h1v5h-1zM544 275h1v4h-1zM545 279h1v5h-1zM546 284h1v5h-1zM547 289h1v4h-1zM548 293h1v3h-1zM549 292h1v2h-1zM550 290h1v2h-1zM551 288h1v2h-1zM552 286h1v2h-1zM553 284h1v2h-1zM554 282h1v2h-1zM555 281h1v1h-1zM556 279h1v2h-1zM557 277h1v2h-1zM558 275h1v2h-1zM559 273h1v2h-1zM560 272h1v1h-1zM561 270h1v2h-1zM562 269h1v1h-1zM563 267h1v2h-1zM564 266h1v1h-1zM565 264h1v2h-1zM566 263h1v1h-1zM567 262h1v1h-1zM568 260h1v2h-1zM569 259h1v1h-1zM570 258h1v1h-1zM571 256h1v2h-1zM572 255h1v1h-1zM573 254h1v1h-1zM574 252h1v2h-1zM575 251h1v1h-1zM576 250h1v1h-1zM577 249h1v1h-1zM578 248h1v1h-1zM579 247h1v1h-1zM580 246h1v1h-1zM581 245h1v1h-1zM582 244h1v1h-1zM583 243h1v1h-1zM584 242h1v1h-1zM585 241h1v1h-1zM586 240h1v1h-1zM587 239h1v1h-1zM588 238h1v1h-1zM589 237h1v1h-1zM590 236h1v1h-1zM591 235h1v1h-1zM592 230h1v5h-1zM593 230h1v13h-1zM594 243h1v4h-1zM595 247h1v5h-1zM596 252h1v5h-1zM597 257h1v4h-1zM598 261h1v5h-1zM599 266h1v4h-1zM600 270h1v5h-1zM601 275h1v4h-1zM602 279h1v5h-1zM603 284h1v5h-1zM604 289h1v4h-1zM605 293h1v3h-1zM606 292h1v2h-1zM607 290h1v2h-1zM608 288h1v2h-1zM609 286h1v2h-1zM610 284h1v2h-1zM611 282h1v2h-1zM612 281h1v1h-1z"/>
<path fill="#00ff00" d="M58 385h1v1h-1zM59 385h1v1h-1zM60 385h1v1h-1zM61 386h1v1h-1zM62 386h1v1h-1zM63 386h1v1h-1zM64 386h1v1h-1zM65 386h1v1h-1zM66 387h1v1h-1zM67 387h1v1h-1zM68 387h1v1h-1zM69 387h1v1h-1zM70 387h1v1h-1zM71 388h1v1h-1zM72 388h1v1h-1zM73 388h1v1h-1zM74 388h1v1h-1zM75 388h1v1h-1zM76 389h1v1h-1zM77 389h1v1h-1zM78 389h1v1h-1zM79 389h1v1h-1zM80 389h1v1h-1zM81 390h1v1h-1zM82 390h1v1h-1zM83 382h1v9h-1zM84 324h1v59h-1zM85 324h1v1h-1zM86 324h1v1h-1zM87 324h1v1h-1zM88 324h1v1h-1zM89 324h1v1h-1zM90 325h1v1h-1zM91 325h1v1h-1zM92 325h1v1h-1zM93 325h1v1h-1zM94 325h1v1h-1zM95 326h1v1h-1zM96 326h1v1h-1zM97 326h1v69h-1zM98 381h1v1h-1zM99 381h1v1h-1zM100 382h1v1h-1zM101 382h1v1h-1zM102 382h1v1h-1zM103 382h1v1h-1zM104 383h1v1h-1zM105 383h1v1h-1zM106 383h1v1h-1zM107 383h1v1h-1zM108 383h1v1h-1zM109 384h1v1h-1zM110 384h1v1h-1zM111 384h1v1h-1zM112 384h1v1h-1zM113 384h1v1h-1zM114 385h1v1h-1zM115 385h1v1h-1zM116 385h1v1h-1zM117 385h1v1h-1zM118 386h1v1h-1zM119 386h1v1h-1zM120 386h1v1h-1zM121 386h1v1h-1zM122 386h1v1h-1zM123 387h1v1h-1zM124 387h1v1h-1zM125 387h1v1h-1zM126 387h1v1h-1zM127 387h1v1h-1zM128 388h1v1h-1zM129 388h1v1h-1zM130 388h1v1h-1zM131 388h1v1h-1zM132 389h1v1h-1zM133 389h1v1h-1zM134 389h1v1h-1zM135 389h1v1h-1zM136 389h1v1h-1zM137 390h1v1h-1zM138 390h1v1h-1zM139 390h1v1h-1zM140 324h1v67h-1zM141 324h1v1h-1zM142 324h1v1h-1zM143 324h1v1h-1zM144 324h1v1h-1zM145 324h1v1h-1zM146 325h1v1h-1zM147 325h1v1h-1zM148 325h1v1h-1zM149 325h1v1h-1zM150 325h1v1h-1zM151 326h1v1h-1zM152 326h1v1h-1zM153 326h1v69h-1zM154 381h1v1h-1zM155 381h1v1h-1zM156 382h1v1h-1zM157 382h1v1h-1zM158 382h1v1h-1zM159 382h1v1h-1zM160 383h1v1h-1zM161 383h1v1h-1zM162 383h1v1h-1zM163 383h1v1h-1zM164 383h1v1h-1zM165 384h1v1h-1zM166 384h1v1h-1zM167 384h1v1h-1zM168 384h1v1h-1zM169 384h1v1h-1zM170 385h1v1h-1zM171 385h1v1h-1zM172 385h1v1h-1zM173 385h1v1h-1zM174 386h1v1h-1zM175 386h1v1h-1zM176 386h1v1h-1zM177 386h1v1h-1zM178 386h1v1h-1zM179 387h1v1h-1zM180 387h1v1h-1zM181 387h1v1h-1zM182 387h1v1h-1zM183 387h1v1h-1zM184 388h1v1h-1zM185 388h1v1h-1zM186 388h1v1h-1zM187 388h1v1h-1zM188 389h1v1h-1zM189 389h1v1h-1zM190 389h1v1h-1zM191 389h1v1h-1zM192 389h1v1h-1zM193 390h1v1h-1zM194 390h1v1h-1zM195 390h1v1h-1zM196 324h1v67h-1zM197 324h1v1h-1zM198 324h1v1h-1zM199 324h1v1h-1zM200 324h1v1h-1zM201 324h1v1h-1zM202 325h1v1h-1zM203 325h1v1h-1zM204 325h1v1h-1zM205 325h1v1h-1zM206 325h1v1h-1zM207 326h1v1h-1zM208 326h1v1h-1zM209 326h1v1h-1zM210 326h1v69h-1zM211 381h1v1h-1zM212 381h1v1h-1zM213 382h1v1h-1zM214 382h1v1h-1zM215 382h1v1h-1zM216 382h1v1h-1zM217 383h1v1h-1zM218 383h1v1h-1zM219 383h1v1h-1zM220 383h1v1h-1zM221 383h1v1h-1zM222 384h1v1h-1zM223 384h1v1h-1zM224 384h1v1h-1zM225 384h1v1h-1zM226 384h1v1h-1zM227 385h1v1h-1zM228 385h1v1h-1zM229 385h1v1h-1zM230 385h1v1h-1zM231 386h1v1h-1zM232 386h1v1h-1zM233 386h1v1h-1zM234 386h1v1h-1zM235 386h1v1h-1zM236 387h1v1h-1zM237 387h1v1h-1zM238 387h1v1h-1zM239 387h1v1h-1zM240 387h1v1h-1zM241 388h1v1h-1zM242 388h1v1h-1zM243 388h1v1h-1zM244 388h1v1h-1zM245 389h1v1h-1zM246 389h1v1h-1zM247 389h1v1h-1zM248 389h1v1h-1zM249 389h1v1h-1zM250 390h1v1h-1zM251 390h1v1h-1zM252 390h1v1h-1zM253 324h1v67h-1zM254 324h1v1h-1zM255 324h1v1h-1zM256 324h1v1h-1zM257 324h1v1h-1zM258 324h1v1h-1zM259 325h1v1h-1zM260 325h1v1h-1zM261 325h1v1h-1zM262 325h1v1h-1zM263 325h1v1h-1zM264 326h1v1h-1zM265 326h1v1h-1zM266 326h1v69h-1zM267 381h1v1h-1zM268 381h1v1h-1zM269 382h1v1h-1zM270 382h1v1h-1zM271 382h1v1h-1zM272 382h1v1h-1zM273 383h1v1h-1zM274 383h1v1h-1zM275 383h1v1h-1zM276 383h1v1h-1zM277 383h1v1h-1zM278 384h1v1h-1zM279 384h1v1h-1zM280 384h1v1h-1zM281 384h1v1h-1zM282 384h1v1h-1zM283 385h1v1h-1zM284 385h1v1h-1zM285 385h1v1h-1zM286 385h1v1h-1zM287 386h1v1h-1zM288 386h1v1h-1zM289 386h1v1h-1zM290 386h1v1h-1zM291 386h1v1h-1zM292 387h1v1h-1zM293 387h1v1h-1zM294 387h1v1h-1zM295 387h1v1h-1zM296 387h1v1h-1zM297 388h1v1h-1zM298 388h1v1h-1zM299 388h1v1h-1zM300 388h1v1h-1zM301 389h1v1h-1zM302 389h1v1h-1zM303 389h1v1h-1zM304 389h1v1h-1zM305 389h1v1h-1zM306 390h1v1h-1zM307 390h1v1h-1zM308 390h1v1h-1zM309 324h1v67h-1zM310 324h1v1h-1zM311 324h1v1h-1zM312 324h1v1h-1zM313 324h1v1h-1zM314 324h1v1h-1zM315 325h1v1h-1zM316 325h1v1h-1zM317 325h1v1h-1zM318 325h1v1h-1zM319 325h1v1h-1zM320 326h1v1h-1zM321 326h1v1h-1zM322 326h1v1h-1zM323 326h1v69h-1zM324 381h1v1h-1zM325 381h1v1h-1zM326 382h1v1h-1zM327 382h1v1h-1zM328 382h1v1h-1zM329 382h1v1h-1zM330 383h1v1h-1zM331 383h1v1h-1zM332 383h1v1h-1zM333 383h1v1h-1zM334 383h1v1h-1zM335 384h1v1h-1zM336 384h1v1h-1zM337 384h1v1h-1zM338 384h1v1h-1zM339 384h1v1h-1zM340 385h1v1h-1zM341 385h1v1h-1zM342 385h1v1h-1zM343 385h1v1h-1zM344 386h1v1h-1zM345 386h1v1h-1zM346 386h1v1h-1zM347 386h1v1h-1zM348 386h1v1h-1zM349 387h1v1h-1zM350 387h1v1h-1zM351 387h1v1h-1zM352 387h1v1h-1zM353 387h1v1h-1zM354 388h1v1h-1zM355 388h1v1h-1zM356 388h1v1h-1zM357 388h1v1h-1zM358 389h1v1h-1zM359 389h1v1h-1zM360 389h1v1h-1zM361 389h1v1h-1zM362 389h1v1h-1zM363 390h1v1h-1zM364 390h1v1h-1zM365 390h1v1h-1zM366 324h1v67h-1zM367 324h1v1h-1zM368 324h1v1h-1zM369 324h1v1h-1zM370 324h1v1h-1zM371 324h1v1h-1zM372 325h1v1h-1zM373 325h1v1h-1zM374 325h1v1h-1zM375 325h1v1h-1zM376 325h1v1h-1zM377 326h1v1h-1zM378 326h1v1h-1zM379 326h1v69h-1zM380 381h1v1h-1zM381 381h1v1h-1zM382 382h1v1h-1zM383 382h1v1h-1zM384 382h1v1h-1zM385 382h1v1h-1zM386 383h1v1h-1zM387 383h1v1h-1zM388 383h1v1h-1zM389 383h1v1h-1zM390 383h1v1h-1zM391 384h1v1h-1zM392 384h1v1h-1zM393 384h1v1h-1zM394 384h1v1h-1zM395 384h1v1h-1zM396 385h1v1h-1zM397 385h1v1h-1zM398 385h1v1h-1zM399 385h1v1h-1zM400 386h1v1h-1zM401 386h1v1h-1zM402 386h1v1h-1zM403 386h1v1h-1zM404 386h1v1h-1zM405 387h1v1h-1zM406 387h1v1h-1zM407 387h1v1h-1zM408 387h1v1h-1zM409 387h1v1h-1zM410 388h1v1h-1zM411 388h1v1h-1zM412 388h1v1h-1zM413 388h1v1h-1zM414 389h1v1h-1zM415 389h1v1h-1zM416 389h1v1h-1zM417 389h1v1h-1zM418 389h1v1h-1zM419 390h1v1h-1zM420 390h1v1h-1zM421 390h1v1h-1zM422 324h1v67h-1zM423 324h1v1h-1zM424 324h1v1h-1zM425 324h1v1h-1zM426 324h1v1h-1zM427 324h1v1h-1zM428 325h1v1h-1zM429 325h1v1h-1zM430 325h1v1h-1zM431 325h1v1h-1zM432 325h1v1h-1zM433 326h1v1h-1zM434 326h1v1h-1zM435 326h1v1h-1zM436 326h1v69h-1zM437 381h1v1h-1zM438 381h1v1h-1zM439 382h1v1h-1zM440 382h1v1h-1zM441 382h1v1h-1zM442 382h1v1h-1zM443 383h1v1h-1zM444 383h1v1h-1zM445 383h1v1h-1zM446 383h1v1h-1zM447 383h1v1h-1zM448 384h1v1h-1zM449 384h1v1h-1zM450 384h1v1h-1zM451 384h1v1h-1zM452 384h1v1h-1zM453 385h1v1h-1zM454 385h1v1h-1zM455 385h1v1h-1zM456 385h1v1h-1zM457 386h1v1h-1zM458 386h1v1h-1zM459 386h1v1h-1zM460 386h1v1h-1zM461 386h1v1h-1zM462 387h1v1h-1zM463 387h1v1h-1zM464 387h1v1h-1zM465 387h1v1h-1zM466 387h1v1h-1zM467 388h1v1h-1zM468 388h1v1h-1zM469 388h1v1h-1zM470 388h1v1h-1zM471 389h1v1h-1zM472 389h1v1h-1zM473 389h1v1h-1zM474 389h1v1h-1zM475 389h1v1h-1zM476 390h1v1h-1zM477 390h1v1h-1zM478 390h1v1h-1zM479 324h1v67h-1zM480 324h1v1h-1zM481 324h1v1h-1zM482 324h1v1h-1zM483 324h1v1h-1zM484 324h1v1h-1zM485 325h1v1h-1zM486 325h1v1h-1zM487 325h1v1h-1zM488 325h1v1h-1zM489 325h1v1h-1zM490 326h1v1h-1zM491 326h1v1h-1zM492 326h1v69h-1zM493 381h1v1h-1zM494 381h1v1h-1zM495 382h1v1h-1zM496 382h1v1h-1zM497 382h1v1h-1zM498 382h1v1h-1zM499 383h1v1h-1zM500 383h1v1h-1zM501 383h1v1h-1zM502 383h1v1h-1zM503 383h1v1h-1zM504 384h1v1h-1zM505 384h1v1h-1zM506 384h1v1h-1zM507 384h1v1h-1zM508 384h1v1h-1zM509 385h1v1h-1zM510 385h1v1h-1zM511 385h1v1h-1zM512 385h1v1h-1zM513 386h1v1h-1zM514 386h1v1h-1zM515 386h1v1h-1zM516 386h1v1h-1zM517 386h1v1h-1zM518 387h1v1h-1zM519 387h1v1h-1zM520 387h1v1h-1zM521 387h1v1h-1zM522 387h1v1h-1zM523 388h1v1h-1zM524 388h1v1h-1zM525 388h1v1h-1zM526 388h1v1h-1zM527 389h1v1h-1zM528 389h1v1h-1zM529 389h1v1h-1zM530 389h1v1h-1zM531 389h1v1h-1zM532 390h1v1h-1zM533 390h1v1h-1zM534 390h1v1h-1zM535 324h1v67h-1zM536 324h1v1h-1zM537 324h1v1h-1zM538 324h1v1h-1zM539 324h1v1h-1zM540 324h1v1h-1zM541 325h1v1h-1zM542 325h1v1h-1zM543 325h1v1h-1zM544 325h1v1h-1zM545 325h1v1h-1zM546 326h1v1h-1zM547 326h1v1h-1zM548 326h1v69h-1zM549 381h1v1h-1zM550 381h1v1h-1zM551 382h1v1h-1zM552 382h1v1h-1zM553 382h1v1h-1zM554 382h1v1h-1zM555 382h1v1h-1zM556 383h1v1h-1zM557 383h1v1h-1zM558 383h1v1h-1zM559 383h1v1h-1zM560 384h1v1h-1zM561 384h1v1h-1zM562 384h1v1h-1zM563 384h1v1h-1zM564 384h1v1h-1zM565 385h1v1h-1zM566 385h1v1h-1zM567 385h1v1h-1zM568 385h1v1h-1zM569 385h1v1h-1zM570 386h1v1h-1zM571 386h1v1h-1zM572 386h1v1h-1zM573 386h1v1h-1zM574 386h1v1h-1zM575 387h1v1h-1zM576 387h1v1h-1zM577 387h1v1h-1zM578 387h1v1h-1zM579 387h1v1h-1zM580 388h1v1h-1zM581 388h1v1h-1zM582 388h1v1h-1zM583 388h1v1h-1zM584 389h1v1h-1zM585 389h1v1h-1zM586 389h1v1h-1zM587 389h1v1h-1zM588 389h1v1h-1zM589 390h1v1h-1zM590 390h1v1h-1zM591 390h1v1h-1zM592 324h1v67h-1zM593 324h1v1h-1zM594 324h1v1h-1zM595 324h1v1h-1zM596 324h1v1h-1zM597 324h1v1h-1zM598 325h1v1h-1zM599 325h1v1h-1zM600 325h1v1h-1zM601 325h1v1h-1zM602 325h1v1h-1zM603 326h1v1h-1zM604 326h1v1h-1zM605 326h1v69h-1zM606 381h1v1h-1zM607 381h1v1h-1zM608 381h1v1h-1zM609 382h1v1h-1zM610 382h1v1h-1zM611 382h1v1h-1zM612 382h1v1h-1z"/>
</svg>
<div class="yl" style="top:37px">2.36A</div>
<div class="yl" style="top:55px">2.24A</div>
<div class="yl" style="top:73px">2.12A</div>
<div class="yl" style="top:90px">2.00A</div>
<div class="yl" style="top:108px">1.88A</div>
<div class="tt" style="top:28px;color:#a8a8a8">I(L1)</div>
<div class="yl" style="top:129px">920mV</div>
<div class="yl" style="top:147px">860mV</div>
<div class="yl" style="top:165px">800mV</div>
<div class="yl" style="top:182px">740mV</div>
<div class="yl" style="top:200px">680mV</div>
<div class="tt" style="top:120px;color:#00bcbc">V(sns)</div>
<div class="yl" style="top:221px">4.13V</div>
<div class="yl" style="top:239px">4.10V</div>
<div class="yl" style="top:257px">4.07V</div>
<div class="yl" style="top:274px">4.04V</div>
<div class="yl" style="top:292px">4.01V</div>
<div class="tt" style="top:212px;color:#ff0000">V(cmp)</div>
<div class="yl" style="top:313px">24.02V</div>
<div class="yl" style="top:347px">23.96V</div>
<div class="yl" style="top:387px">23.89V</div>
<div class="tt" style="top:304px;color:#00ff00">V(vout)</div>
<div class="xl" style="left:18px">0µs</div>
<div class="xl" style="left:73px">10µs</div>
<div class="xl" style="left:129px">20µs</div>
<div class="xl" style="left:184px">30µs</div>
<div class="xl" style="left:240px">40µs</div>
<div class="xl" style="left:295px">50µs</div>
<div class="xl" style="left:350px">60µs</div>
<div class="xl" style="left:406px">70µs</div>
<div class="xl" style="left:461px">80µs</div>
<div class="xl" style="left:517px">90µs</div>
<div class="xl" style="left:572px">100µs</div>
</body></html>
